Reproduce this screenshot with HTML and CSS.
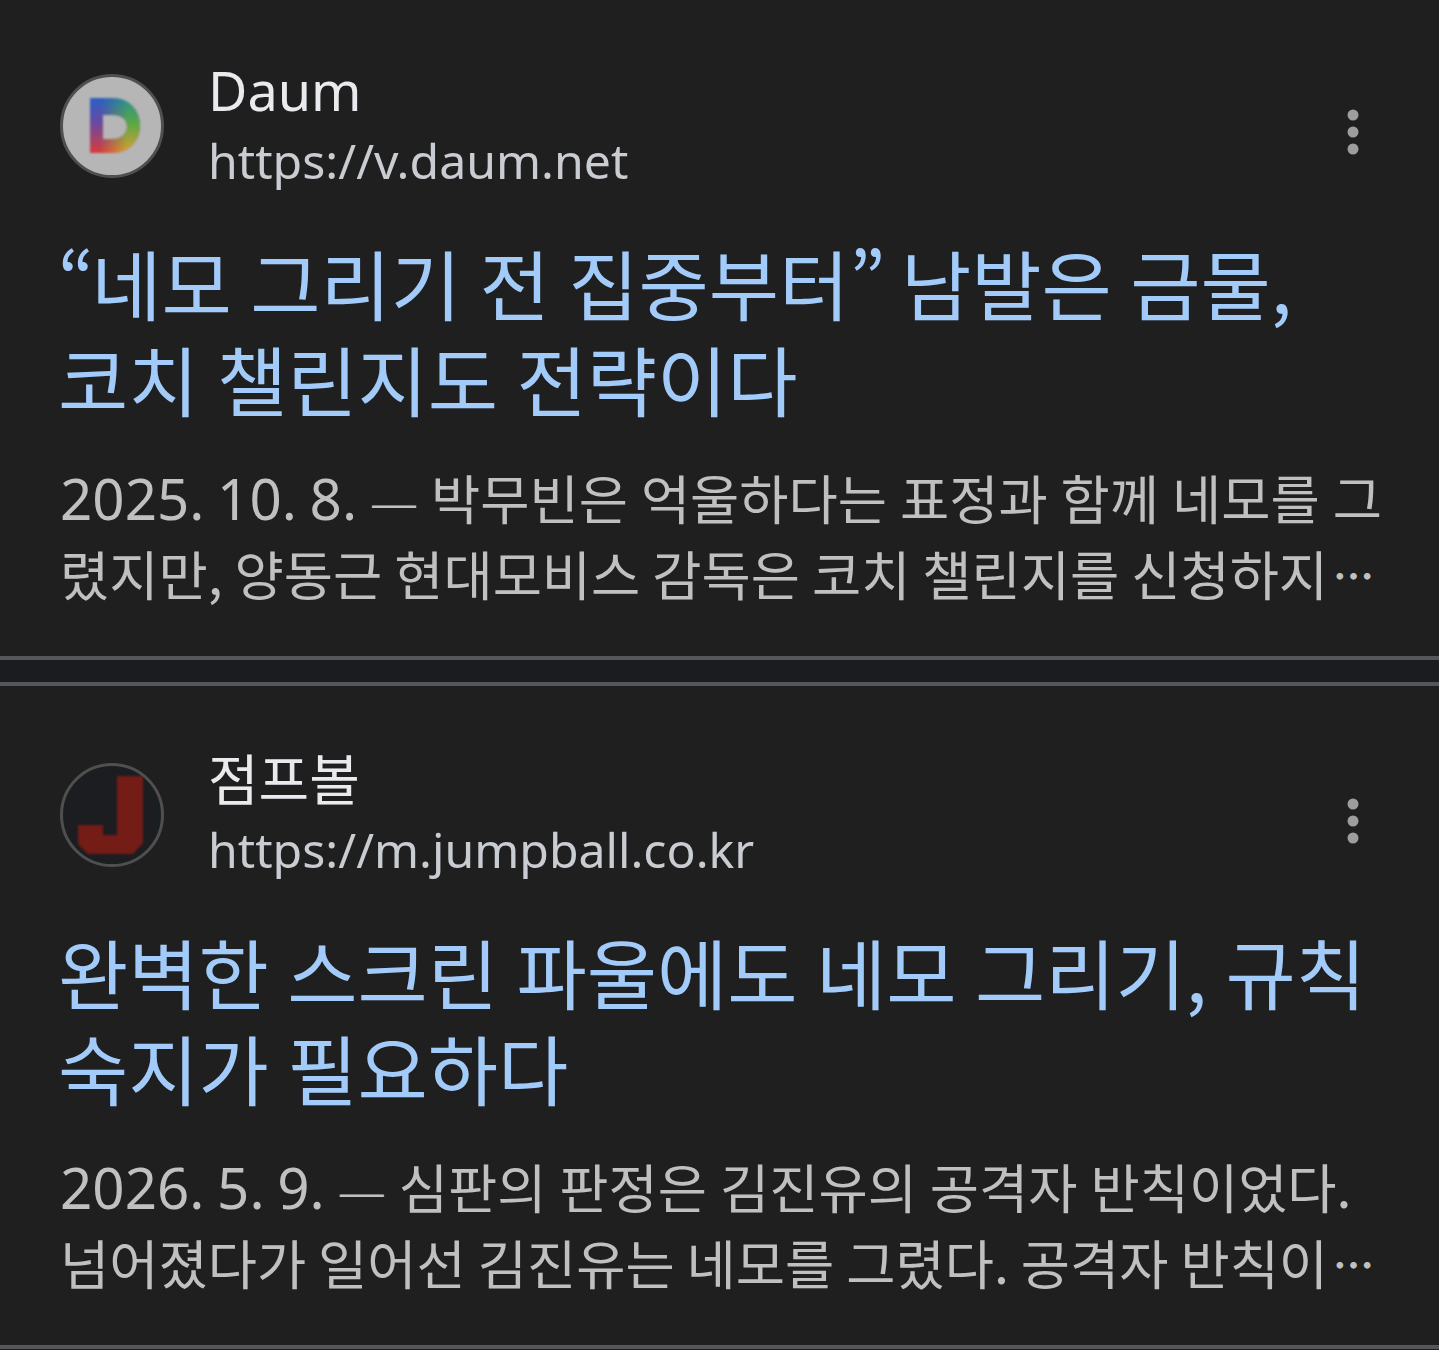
FILE: index.html
```html
<!DOCTYPE html>
<html lang="ko">
<head>
<meta charset="utf-8">
<title>검색 결과</title>
<link rel="stylesheet" href="styles.css">
</head>
<body>
<main class="feed">
  <article class="card">
    <header class="source">
      <div class="avatar avatar-daum">
        <svg class="logo" viewBox="0 0 104 104" aria-hidden="true">
          <defs>
            <linearGradient id="dl" x1="0" y1="0" x2="0" y2="1">
              <stop offset="0" stop-color="#2a5fc8"/>
              <stop offset="0.45" stop-color="#6a4aa0"/>
              <stop offset="1" stop-color="#d83c3c"/>
            </linearGradient>
            <linearGradient id="dn" x1="0" y1="0" x2="0" y2="1">
              <stop offset="0" stop-color="#2c8f8a"/>
              <stop offset="0.45" stop-color="#58a848"/>
              <stop offset="1" stop-color="#dba02c"/>
            </linearGradient>
            <linearGradient id="df" x1="0" y1="0" x2="1" y2="0">
              <stop offset="0.2" stop-color="#000"/>
              <stop offset="0.75" stop-color="#fff"/>
            </linearGradient>
            <mask id="dm"><rect x="30" y="24" width="50" height="55" fill="url(#df)"/></mask>
            <clipPath id="dc"><path clip-rule="evenodd" d="M30 24H52C69 24 80 36 80 51.500S69 79 52 79H30ZM43 41V65H53C61 65 67 60 67 52.500S61 41 53 41Z"/></clipPath>
          </defs>
          <g clip-path="url(#dc)">
            <rect x="30" y="24" width="50" height="55" fill="url(#dl)"/>
            <rect x="30" y="24" width="50" height="55" fill="url(#dn)" mask="url(#dm)"/>
          </g>
        </svg>
      </div>
      <div class="source-text">
        <div class="source-name">Daum</div>
        <div class="source-url">https://v.daum.net</div>
      </div>
      <svg class="more" viewBox="0 0 12 46" aria-hidden="true"><circle cx="6" cy="6" r="5.500"/><circle cx="6" cy="23" r="5.500"/><circle cx="6" cy="40" r="5.500"/></svg>
    </header>
    <h2 class="title"><span class="line"><span class="quote">“</span>네모 그리기 전 집중부터<span class="quote">”</span> 남발은 금물,</span><span class="line">코치 챌린지도 전략이다</span></h2>
    <p class="snippet"><span class="line"><span class="date">2025. 10. 8.</span> <span class="dash">—</span> 박무빈은 억울하다는 표정과 함께 네모를 그</span><span class="line cont">렸지만, 양동근 현대모비스 감독은 코치 챌린지를 신청하지<span class="dots">…</span></span></p>
  </article>
  <div class="gap"></div>
  <article class="card">
    <header class="source">
      <div class="avatar avatar-jump">
        <svg class="logo" viewBox="0 0 104 104" aria-hidden="true">
          <path fill="#741c16" d="M57 13H83V80L73 91H28L18 81V62H43V72H57Z"/>
        </svg>
      </div>
      <div class="source-text">
        <div class="source-name source-name-ko">점프볼</div>
        <div class="source-url">https://m.jumpball.co.kr</div>
      </div>
      <svg class="more" viewBox="0 0 12 46" aria-hidden="true"><circle cx="6" cy="6" r="5.500"/><circle cx="6" cy="23" r="5.500"/><circle cx="6" cy="40" r="5.500"/></svg>
    </header>
    <h2 class="title"><span class="line">완벽한 스크린 파울에도 네모 그리기, 규칙</span><span class="line">숙지가 필요하다</span></h2>
    <p class="snippet"><span class="line"><span class="date">2026. 5. 9.</span> <span class="dash">—</span> 심판의 판정은 김진유의 공격자 반칙이었다.</span><span class="line cont">넘어졌다가 일어선 김진유는 네모를 그렸다. 공격자 반칙이<span class="dots">…</span></span></p>
  </article>
</main>
</body>
</html>
```
FILE: styles.css
```css
* { box-sizing: border-box; }
html, body { margin: 0; padding: 0; }
body {
  background: #1f1f1f;
  font-family: "Noto Sans CJK KR", "Noto Sans", sans-serif;
  width: 1439px;
  height: 1350px;
  overflow: hidden;
}
.feed { display: flex; flex-direction: column; margin-top: -3px; height: 1353px; background: #1b1c20; }
.card {
  height: 659px;
  padding: 67px 60px 0;
  display: flex;
  flex-direction: column;
  background: #1f1f1f;
  flex: none;
}
.card:last-child { border-bottom: 4px solid #555659; height: 663px; }
.source { display: flex; align-items: center; height: 124px; }
.avatar {
  width: 104px;
  height: 104px;
  border-radius: 50%;
  flex: none;
  border: 3px solid #4f4f4f;
  overflow: hidden;
  position: relative;
}
.avatar-daum { background: #b6b6b6; }
.avatar-jump { background: #1b1d21; }
.logo { position: absolute; left: -3px; top: -3px; width: 104px; height: 104px; filter: blur(0.8px); }
.source-text { margin: -2px 0 0 44px; flex: 1; display: flex; flex-direction: column; }
.source-name { font-size: 54px; line-height: 68px; margin-bottom: 2px; color: #e9eaed; font-family: "Noto Sans", "Noto Sans CJK KR", sans-serif; font-weight: 400; }
.source-name-ko { font-size: 55px; }
.source-url { font-size: 48.200px; line-height: 68px; color: #c9ccd1; font-family: "Noto Sans", "Noto Sans CJK KR", sans-serif; font-weight: 400; }
.more { width: 12px; height: 46px; fill: #9d9d9d; margin: 12px 20px 0 0; flex: none; }
.line { display: block; white-space: nowrap; height: 76px; }
.title { margin: 46px 0 0 -2px; font-size: 76.400px; line-height: 96px; font-weight: 400; color: #a3cbfa; word-spacing: -3px; }
.title .line { height: 96px; }
.quote { letter-spacing: -3px; }
.snippet { margin: 33px 0 0; font-size: 53.500px; line-height: 76px; color: #c0c0c0; font-weight: 400; word-spacing: -2px; }
.cont { word-spacing: -3px; }
.date { font-size: 56.500px; font-family: "Noto Sans", sans-serif; font-weight: 400; }
.dash { font-family: "Noto Sans", sans-serif; font-weight: 300; font-size: 48px; }
.dots { font-size: 41px; font-weight: 700; vertical-align: 4px; margin-left: 5px; }
.gap { height: 30px; flex: none; background: #1b1c20; border-top: 4px solid #555659; border-bottom: 4px solid #555659; }
```
